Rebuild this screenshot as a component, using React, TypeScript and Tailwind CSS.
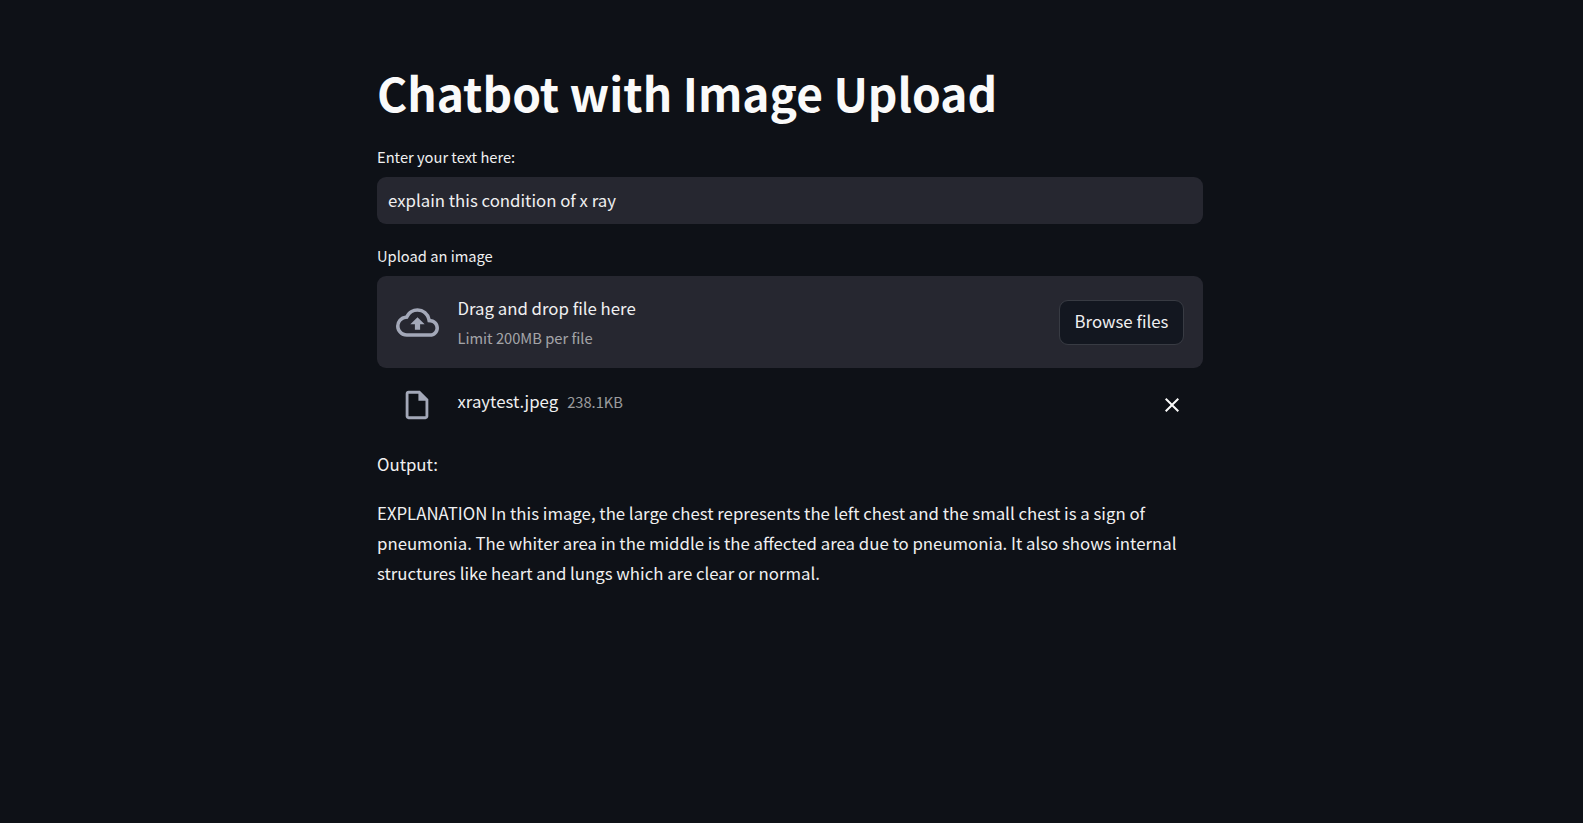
import { MdOutlineCloudUpload, MdOutlineInsertDriveFile, MdClose } from "react-icons/md";

export default function App() {
  return (
    <div className="min-h-screen bg-[#0e1117] font-['Noto_Sans_CJK_SC','Noto_Sans_CJK_JP',sans-serif] text-[#fafafa]">
      <main className="ml-[377px] w-[826px] pt-[62px] text-[16.8px] whitespace-nowrap">
        <h1 className="text-[46.08px] leading-[60px] font-bold">Chatbot with Image Upload</h1>
        <label className="mt-[22px] block text-[14.68px] leading-[25px] text-[#f0f0f1]">Enter your text here:</label>
        <div className="mt-[8px] h-[47px] rounded-[9px] bg-[#262730] px-[11px] leading-[46px] text-[#f0f0f1]">explain this condition of x ray</div>
        <div className="mt-[19px] text-[14.68px] leading-[25px] text-[#f0f0f1]">Upload an image</div>
        <section className="mt-[8px] flex h-[92px] items-center rounded-[9px] bg-[#262730] px-[19px]">
          <MdOutlineCloudUpload className="size-[43px] text-[#a3a8b8]" />
          <div className="ml-[18.5px] flex flex-1 flex-col">
            <span className="leading-[30px] text-[#f0f0f1]">Drag and drop file here</span>
            <span className="mb-[-2px] text-[14.68px] leading-[30px] text-[#fafafa]/60">Limit 200MB per file</span>
          </div>
          <button className="h-[45px] w-[125px] rounded-[9px] border border-[#383b43] bg-[#131720] pb-[1px] text-[#f0f0f1]">Browse files</button>
        </section>
        <div className="flex h-[74px] items-center px-[19px]">
          <MdOutlineInsertDriveFile className="ml-[4px] size-[34px] text-[#a3a8b8]" />
          <span className="ml-[23.5px] pb-[6px] text-[#f0f0f1]">xraytest.jpeg</span>
          <span className="ml-[9px] flex-1 pb-[5px] text-[14.68px] text-[#fafafa]/60">238.1KB</span>
          <MdClose className="size-[24px]" />
        </div>
        <p className="mt-[7px] leading-[30px] text-[#f0f0f1]">Output:</p>
        <p className="mt-[19px] leading-[30px] whitespace-nowrap text-[#f0f0f1]">
          EXPLANATION In this image, the large chest represents the left chest and the small chest is a sign of<br />
          pneumonia. The whiter area in the middle is the affected area due to pneumonia. It also shows internal<br />
          structures like heart and lungs which are clear or normal.
        </p>
      </main>
    </div>
  );
}
